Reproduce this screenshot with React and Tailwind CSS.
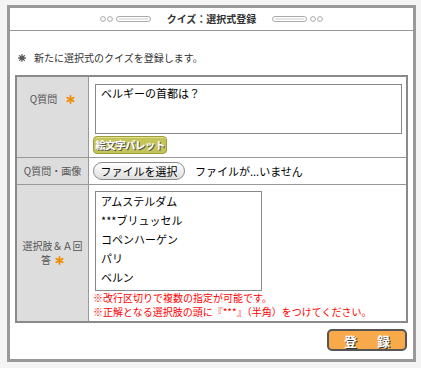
const Star = ({ className = "" }) => (
  <svg width="9" height="9" viewBox="0 0 10 10" className={className}>
    <g stroke="#f08c00" strokeWidth="2" strokeLinecap="round">
      <line x1="5" y1="1" x2="5" y2="9" />
      <line x1="1.5" y1="3" x2="8.5" y2="7" />
      <line x1="1.5" y1="7" x2="8.5" y2="3" />
    </g>
  </svg>
);

const Deco = ({ flip }) => (
  <svg width="52" height="8" viewBox="0 0 52 8" style={flip ? { transform: "scaleX(-1)" } : undefined}>
    <circle cx="3" cy="4" r="2.4" fill="#fff" stroke="#aaa" strokeWidth="1" />
    <circle cx="10" cy="4" r="2.4" fill="#fff" stroke="#aaa" strokeWidth="1" />
    <rect x="16.5" y="1.5" width="34" height="5" rx="2.5" fill="#fff" stroke="#aaa" strokeWidth="1" />
    <line x1="19" y1="4" x2="48" y2="4" stroke="#ccc" strokeWidth="1" />
  </svg>
);

export default function App() {
  return (
    <div className="w-[421px] h-[368px] bg-[#f4f4f4] pt-[5px] pl-[7px] font-['Noto_Sans_CJK_JP',sans-serif]">
      <div className="w-[409px] h-[357px] border-[3px] border-[#999] bg-white flex flex-col">
        <div className="h-[23px] border-b border-[#999] flex items-center justify-center gap-[15px]">
          <Deco />
          <span className="text-[10px] leading-[14px] font-bold text-[#333]">クイズ：選択式登録</span>
          <Deco flip />
        </div>

        <div className="mt-[20px] h-[14px] flex items-center pl-[8px] gap-[8px]">
          <svg width="8" height="8" viewBox="0 0 10 10">
            <g stroke="#555" strokeWidth="1.6" strokeLinecap="round">
              <line x1="5" y1="0.8" x2="5" y2="9.2" />
              <line x1="0.8" y1="5" x2="9.2" y2="5" />
              <line x1="2" y1="2" x2="8" y2="8" />
              <line x1="2" y1="8" x2="8" y2="2" />
            </g>
            <circle cx="5" cy="5" r="2.2" fill="#555" />
          </svg>
          <span className="text-[10px] leading-[14px] text-[#333]">新たに選択式のクイズを登録します。</span>
        </div>

        <div className="mt-[10px] mx-[5px] border-2 border-[#8a8a8a] flex flex-col">
          <div className="flex h-[80px]">
            <div className="w-[72px] shrink-0 bg-[#dddddd] border-r border-[#999] pt-[15px] flex justify-center items-start gap-[9px]">
              <span className="text-[10px] leading-[14px] text-[#555]">Q質問</span>
              <span className="h-[14px] flex items-center"><Star /></span>
            </div>
            <div className="flex-1 pl-[6px] pt-[7px] flex flex-col items-start">
              <div className="w-[307px] h-[50px] border border-[#888] bg-white px-[5px] pt-[1px] text-[11px] leading-[14px] text-black">
                ベルギーの首都は？
              </div>
              <div className="mt-[2px] -ml-[2px] w-[74px] h-[18px] rounded-[4px] bg-[#c4c45a] border border-[#9d9d3a] shadow-[inset_0_1px_0_#e0e090] flex items-center justify-center whitespace-nowrap text-[10.5px] font-bold text-white leading-none tracking-[-0.6px] [text-shadow:1px_1px_0_#555]">
                絵文字パレット
              </div>
            </div>
          </div>

          <div className="flex h-[27px] border-t border-[#999]">
            <div className="w-[72px] shrink-0 bg-[#dddddd] border-r border-[#999] flex items-center justify-center">
              <span className="text-[10px] leading-[14px] text-[#555]">Q質問・画像</span>
            </div>
            <div className="flex-1 pl-[4px] flex items-center gap-[10px]">
              <div className="w-[92px] h-[18px] rounded-full border border-[#8a8a8a] bg-gradient-to-b from-white to-[#dedede] flex items-center justify-center text-[11px] leading-none text-black">
                ファイルを選択
              </div>
              <span className="text-[11px] leading-[14px] text-black">ファイルが...いません</span>
            </div>
          </div>

          <div className="flex h-[137px] border-t border-[#999]">
            <div className="w-[72px] shrink-0 bg-[#dddddd] border-r border-[#999] flex items-center justify-center px-[5px]">
              <span className="text-[10px] leading-[14px] text-[#555] text-center">
                選択肢＆Ａ回答
                <span className="inline-block align-middle ml-[4px] -mt-[2px]"><Star /></span>
              </span>
            </div>
            <div className="flex-1 pl-[6px] pt-[6px] flex flex-col items-start">
              <div className="w-[167px] h-[100px] border border-[#888] bg-white px-[5px] text-[11px] leading-[19px] text-black">
                <div>アムステルダム</div>
                <div>***ブリュッセル</div>
                <div>コペンハーゲン</div>
                <div>パリ</div>
                <div>ベルン</div>
              </div>
              <div className="-ml-[2px] text-[10px] leading-[14px] text-[#ff0000]">
                <div>※改行区切りで複数の指定が可能です。</div>
                <div>※正解となる選択肢の頭に『***』（半角）をつけてください。</div>
              </div>
            </div>
          </div>
        </div>

        <div className="mt-[6px] mr-[6px] flex justify-end">
          <div className="w-[80px] h-[22px] rounded-[5px] border-2 border-[#555] bg-[#f8a94a] flex items-center justify-center gap-[20px] text-[13px] font-bold text-white leading-none [text-shadow:1px_1px_0_#333]">
            <span>登</span>
            <span>録</span>
          </div>
        </div>
      </div>
    </div>
  );
}
